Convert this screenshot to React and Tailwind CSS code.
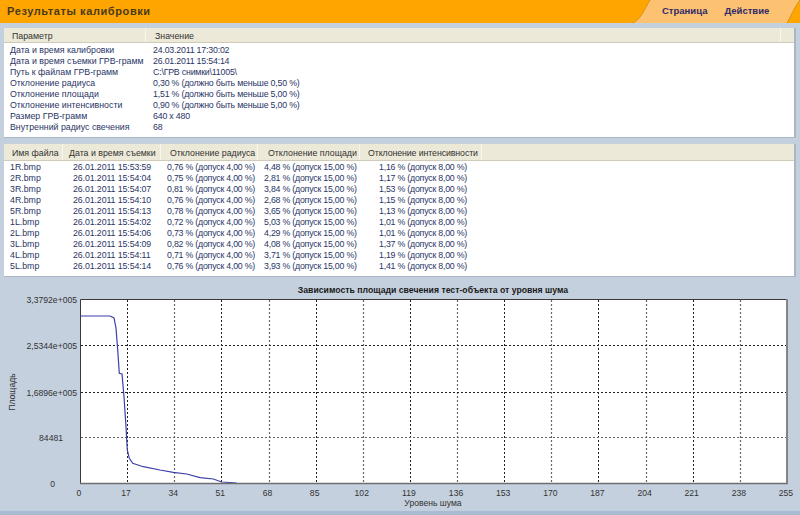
const params = [
  ["Дата и время калибровки", "24.03.2011 17:30:02"],
  ["Дата и время съемки ГРВ-грамм", "26.01.2011 15:54:14"],
  ["Путь к файлам ГРВ-грамм", "C:\\ГРВ снимки\\11005\\"],
  ["Отклонение радиуса", "0,30 % (должно быть меньше 0,50 %)"],
  ["Отклонение площади", "1,51 % (должно быть меньше 5,00 %)"],
  ["Отклонение интенсивности", "0,90 % (должно быть меньше 5,00 %)"],
  ["Размер ГРВ-грамм", "640 x 480"],
  ["Внутренний радиус свечения", "68"],
]

const files = [
  ["1R.bmp", "26.01.2011 15:53:59", "0,76", "4,48", "1,16"],
  ["2R.bmp", "26.01.2011 15:54:04", "0,75", "2,81", "1,17"],
  ["3R.bmp", "26.01.2011 15:54:07", "0,81", "3,84", "1,53"],
  ["4R.bmp", "26.01.2011 15:54:10", "0,76", "2,68", "1,15"],
  ["5R.bmp", "26.01.2011 15:54:13", "0,78", "3,65", "1,13"],
  ["1L.bmp", "26.01.2011 15:54:02", "0,72", "5,03", "1,01"],
  ["2L.bmp", "26.01.2011 15:54:06", "0,73", "4,29", "1,01"],
  ["3L.bmp", "26.01.2011 15:54:09", "0,82", "4,08", "1,37"],
  ["4L.bmp", "26.01.2011 15:54:11", "0,71", "3,71", "1,19"],
  ["5L.bmp", "26.01.2011 15:54:14", "0,76", "3,93", "1,41"],
]

const fileCols = "grid grid-cols-[59px_98px_97px_102px_122px]"

const curve =
  "81,316 110,316 114,318 116,328 117.7,350 119.3,373.3 122,374 124,396.7 126,426.7 127.3,450 129.3,458.3 132.7,463.3 143.3,466.7 160,470 173.3,472.3 186.7,474 200,477.7 213.3,479 221.7,482 236.7,483"

const xTicks = Array.from({ length: 16 }, (_, i) => i)
const yTicks = [
  { y: 345.5, label: "2,5344e+005", x: 77 },
  { y: 392, label: "1,6896e+005", x: 77 },
  { y: 437.7, label: "84481", x: 63 },
]

function Chart() {
  return (
    <svg viewBox="0 280 800 231" className="block w-[800px] h-[231px]" fontFamily="'Liberation Sans', sans-serif">
      <text x="433" y="293" textAnchor="middle" fontSize="8.7" fontWeight="700" fill="#1a1a1a">
        Зависимость площади свечения тест-объекта от уровня шума
      </text>
      <rect x="80.5" y="299.5" width="706" height="184" fill="#fff" />
      {xTicks.slice(1, 15).map((i) => {
        const x = Math.round(80 + i * 47.13) + 0.5
        return (
          <line
            key={i}
            x1={x}
            x2={x}
            y1="300"
            y2="483"
            stroke={i % 2 ? "#1f1f1f" : "#666"}
            strokeWidth={i % 2 ? 1 : 1.2}
            strokeDasharray="2 2"
          />
        )
      })}
      {yTicks.map((t, i) => (
        <line
          key={t.y}
          x1="81"
          x2="786"
          y1={Math.floor(t.y) + 0.5}
          y2={Math.floor(t.y) + 0.5}
          stroke={i === 2 ? "#666" : "#222"}
          strokeDasharray="2 2"
        />
      ))}
      <polyline points={curve} fill="none" stroke="#3b3fa8" strokeWidth="1.2" />
      <path d="M80.5 484V299.5H786" fill="none" stroke="#3a3a3a" />
      <path d="M80 483.5H787V299" fill="none" stroke="#6f6f6f" strokeWidth="1.6" />
      {xTicks.map((i) => (
        <text key={i} x={80 + i * 47.13 - 1} y="496" textAnchor="middle" fontSize="8.6" fill="#333">
          {i * 17}
        </text>
      ))}
      <text x="77" y="303" textAnchor="end" fontSize="8.6" fill="#333">
        3,3792e+005
      </text>
      {yTicks.map((t) => (
        <text key={t.label} x={t.x} y={t.y + 3.5} textAnchor="end" fontSize="8.6" fill="#333">
          {t.label}
        </text>
      ))}
      <text x="55" y="487" textAnchor="end" fontSize="8.6" fill="#333">
        0
      </text>
      <text x="433" y="506" textAnchor="middle" fontSize="8.6" fill="#333">
        Уровень шума
      </text>
      <text transform="translate(15 392) rotate(-90)" textAnchor="middle" fontSize="8.6" fill="#333">
        Площадь
      </text>
    </svg>
  )
}

export default function App() {
  return (
    <div className="w-[800px] h-[515px] overflow-hidden flex flex-col bg-[#c5d0de] font-['Liberation_Sans',sans-serif] text-[8.8px] leading-[11px] text-[#2a3566]">
      <header className="h-[23px] bg-[#ffa500] flex justify-between shrink-0">
        <h1 className="pl-[7px] pt-[5px] text-[11px] leading-[13px] font-bold tracking-[0.6px] text-[#4a3a1c]">
          Результаты калибровки
        </h1>
        <div className="relative w-[168px] flex">
          <svg viewBox="0 0 168 23" className="absolute inset-0 w-full h-full">
            <path d="M0 23C8 21 12 10 18 0H168C162 8 158 18 155 23Z" fill="#fcc272" />
            <path d="M0 23C8 21 12 10 18 0" fill="none" stroke="#d9920f" />
            <path d="M155 23C158 18 162 8 168 0" fill="none" stroke="#d9920f" />
          </svg>
          <nav className="relative flex gap-[17px] pl-[30px] pt-[5px] text-[9.5px] leading-[12px] font-bold text-[#2f2a6b]">
            <span>Страница</span>
            <span>Действие</span>
          </nav>
        </div>
      </header>

      <section className="mt-[5px] mx-[4px] h-[110px] shrink-0 bg-white border-r-2 border-b border-[#a9b6c6]">
        <div className="h-[15px] bg-[#ece9d8] border-b border-[#cfcbb8] flex text-[#333] whitespace-nowrap">
          <div className="w-[142px] pl-[8px] pt-[3px] border-r border-[#f8f6ee]">Параметр</div>
          <div className="w-[635px] pl-[9px] pt-[3px] border-r border-[#f8f6ee]">Значение</div>
        </div>
        <div className="pt-[2px]">
          {params.map(([name, value]) => (
            <div key={name} className="flex h-[11px]">
              <div className="w-[149px] pl-[6px] whitespace-nowrap">{name}</div>
              <div className="whitespace-nowrap tracking-[-0.2px]">{value}</div>
            </div>
          ))}
        </div>
      </section>

      <section className="mt-[6px] mx-[4px] h-[133px] shrink-0 bg-white border-r-2 border-b border-[#a9b6c6]">
        <div className="h-[17px] bg-[#ece9d8] border-b border-[#cfcbb8] text-[#333] whitespace-nowrap">
          <div className={fileCols + " h-full"}>
            <div className="pl-[8px] pt-[4px] border-r border-[#f8f6ee]">Имя файла</div>
            <div className="pl-[6px] pt-[4px] border-r border-[#f8f6ee]">Дата и время съемки</div>
            <div className="pl-[9px] pt-[4px] border-r border-[#f8f6ee]">Отклонение радиуса</div>
            <div className="pl-[10px] pt-[4px] border-r border-[#f8f6ee]">Отклонение площади</div>
            <div className="pl-[8px] pt-[4px] border-r border-[#f8f6ee] tracking-[-0.1px]">Отклонение интенсивности</div>
          </div>
        </div>
        <div className="pt-[1px]">
          {files.map(([name, date, radius, area, intensity]) => (
            <div key={name} className={fileCols + " h-[11px] whitespace-nowrap tracking-[-0.22px]"}>
              <div className="pl-[6px] tracking-normal">{name}</div>
              <div className="pl-[10px] tracking-[-0.1px]">{date}</div>
              <div className="pl-[6px]">{radius} % (допуск 4,00 %)</div>
              <div className="pl-[6px]">{area} % (допуск 15,00 %)</div>
              <div className="pl-[19px]">{intensity} % (допуск 8,00 %)</div>
            </div>
          ))}
        </div>
      </section>

      <div className="mt-[3px] shrink-0">
        <Chart />
      </div>
      <div className="flex-1 bg-[#a9bbd3]" />
    </div>
  )
}
